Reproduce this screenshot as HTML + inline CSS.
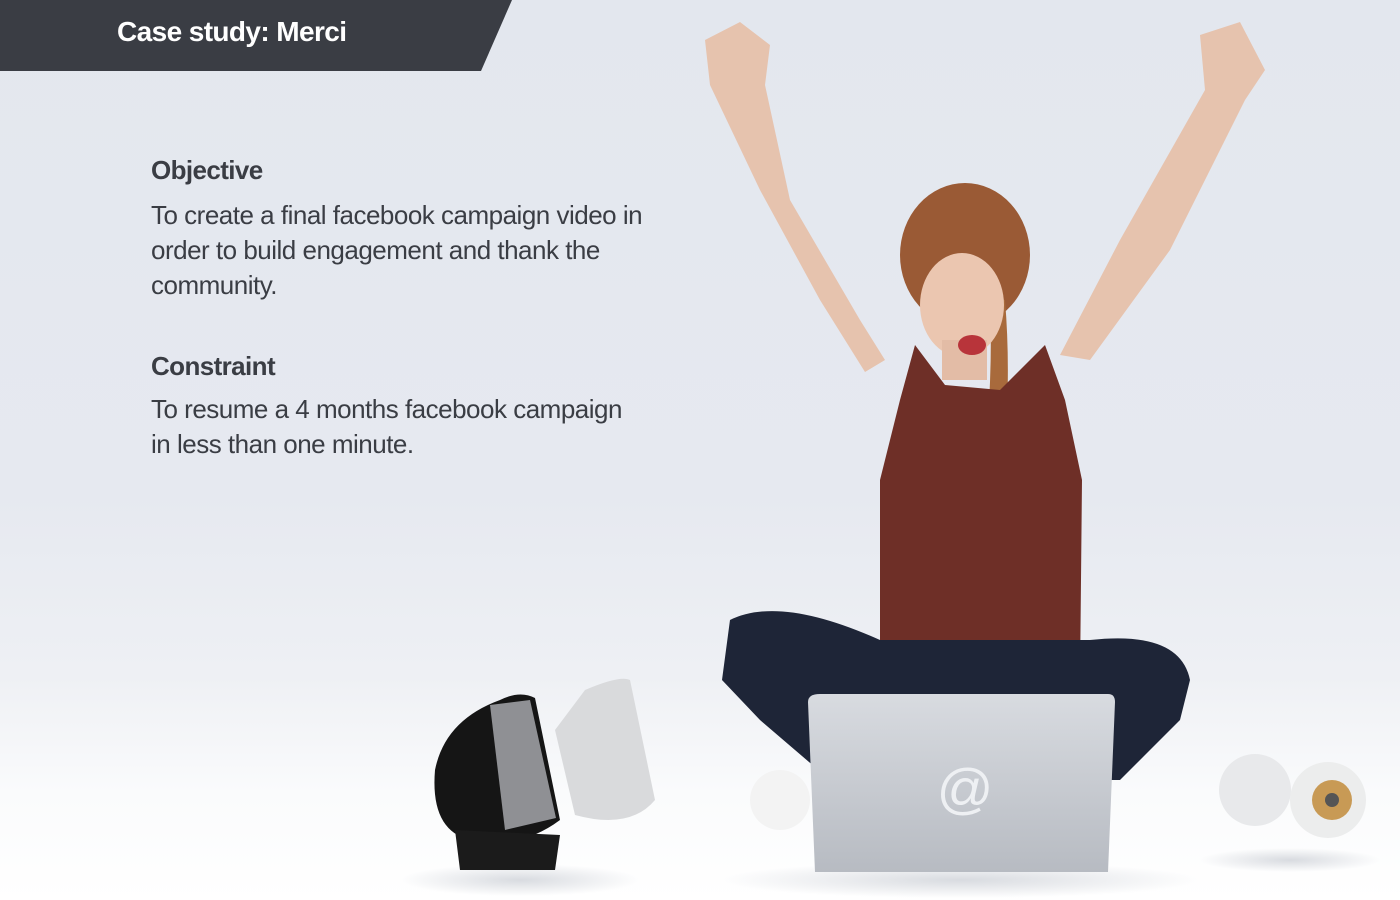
<!DOCTYPE html>
<html><head><meta charset="utf-8">
<style>
html,body{margin:0;padding:0}
body{width:1400px;height:900px;overflow:hidden;position:relative;
background:linear-gradient(180deg,#e3e7ee 0%,#e6e9f0 55%,#eef0f4 75%,#fafbfc 88%,#ffffff 100%);
font-family:"Liberation Sans",sans-serif;}
.hdr{position:absolute;left:0;top:0;width:512px;height:71px;background:#3a3d44;
clip-path:polygon(0 0,512px 0,481px 71px,0 71px);}
.hdr span{position:absolute;left:117px;top:16px;color:#fff;font-weight:bold;font-size:28px;letter-spacing:-0.6px}
h2{position:absolute;margin:0;left:151px;font-size:26px;font-weight:bold;color:#3a3d44;letter-spacing:-0.6px}
p{position:absolute;margin:0;left:151px;font-size:26px;line-height:35px;color:#3a3d44;letter-spacing:-0.5px;width:520px}
svg{position:absolute;left:0;top:0}
</style></head><body>
<div class="hdr"><span>Case study: Merci</span></div>
<h2 style="top:155px">Objective</h2>
<p style="top:198px">To create a final facebook campaign video in order to build engagement and thank the community.</p>
<h2 style="top:351px">Constraint</h2>
<p style="top:392px;width:495px">To resume a 4 months facebook campaign in less than one minute.</p>
<svg width="1400" height="900" viewBox="0 0 1400 900">
<defs>
<radialGradient id="sh" cx="0.5" cy="0.5" r="0.5"><stop offset="0" stop-color="#c8ccd3" stop-opacity="0.7"/><stop offset="1" stop-color="#c8ccd3" stop-opacity="0"/></radialGradient>
<linearGradient id="lap" x1="0" y1="0" x2="0" y2="1"><stop offset="0" stop-color="#d8dbe0"/><stop offset="1" stop-color="#b7bbc2"/></linearGradient>
</defs>
<path d="M705 40 L740 22 L770 45 L765 85 L790 200 L860 320 L885 360 L865 372 L820 300 L760 190 L710 85 Z" fill="#e6c3ae"/>
<path d="M1200 35 L1240 22 L1265 70 L1245 100 L1170 250 L1090 360 L1060 355 L1120 240 L1205 90 Z" fill="#e6c3ae"/>
<ellipse cx="965" cy="255" rx="65" ry="72" fill="#9a5a35"/>
<path d="M1005 300 Q1015 420 990 560 L970 560 Q995 420 990 300 Z" fill="#a86a3c"/>
<ellipse cx="962" cy="305" rx="42" ry="52" fill="#ebc6b0"/>
<rect x="942" y="340" width="45" height="40" fill="#e3bca6"/>
<ellipse cx="972" cy="345" rx="14" ry="10" fill="#b8343a"/>
<path d="M915 345 L945 385 L1000 390 L1045 345 L1065 400 L1082 480 L1080 680 L880 680 L880 480 L900 400 Z" fill="#6e2f27"/>
<path d="M730 620 Q780 595 880 640 L1090 640 Q1180 630 1190 680 L1180 720 L1120 780 L830 780 L760 720 L722 680 Z" fill="#1e2537"/>
<ellipse cx="780" cy="800" rx="30" ry="30" fill="#f3f3f3"/>
<ellipse cx="960" cy="880" rx="240" ry="18" fill="url(#sh)"/>
<path d="M820 694 L1108 694 Q1115 694 1115 702 L1108 872 L815 872 L808 702 Q808 694 820 694 Z" fill="url(#lap)"/>
<text x="965" y="808" font-family="Liberation Sans,sans-serif" font-size="56" fill="#eef0f3" text-anchor="middle">@</text>
<ellipse cx="520" cy="880" rx="120" ry="16" fill="url(#sh)"/>
<path d="M585 690 Q620 675 630 680 L655 800 Q630 830 575 815 L555 730 Z" fill="#d9dadc"/>
<path d="M500 700 Q520 690 535 698 L560 820 Q520 850 470 840 Q430 830 435 770 Q445 720 500 700 Z" fill="#151515"/>
<path d="M490 705 L530 700 L556 818 L505 830 Z" fill="#8f9094"/>
<path d="M455 830 L560 835 L555 870 L460 870 Z" fill="#1b1b1b"/>
<ellipse cx="1290" cy="860" rx="90" ry="12" fill="url(#sh)"/>
<circle cx="1255" cy="790" r="36" fill="#e8e9eb"/>
<circle cx="1328" cy="800" r="38" fill="#eceded"/>
<circle cx="1332" cy="800" r="20" fill="#c89a55"/>
<circle cx="1332" cy="800" r="7" fill="#555"/>
</svg>
</body></html>
